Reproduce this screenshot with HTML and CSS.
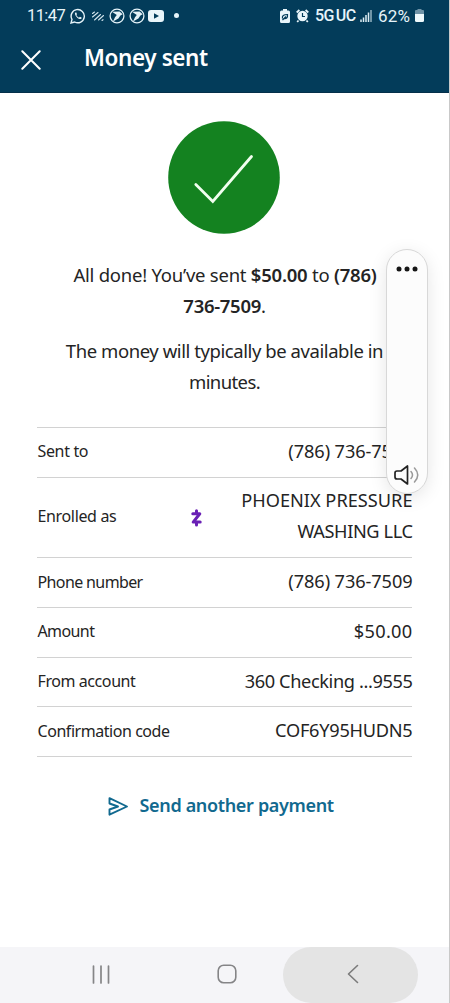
FILE: index.html
```html
<!DOCTYPE html>
<html lang="en">
<head>
<meta charset="utf-8">
<title>Money sent</title>
<link rel="stylesheet" href="styles.css">
</head>
<body>
<div class="screen">
  <header class="header">
    <div class="status">
      <div class="status-left">
        <span class="clock">11:47</span>
        <svg class="i-chat" width="16" height="16" viewBox="0 0 16 16" fill="none" stroke="#e4f2f8" stroke-width="1.4"><path d="M1 15l1-3.6A6.6 6.6 0 1 1 4.700 14z"/><path d="M5.300 4.500c-1 1.300.3 3.500 1.800 4.900s3.400 2.300 4.400 1.100l.1-.9-1.700-.8-1 .9C7.700 9.100 6.800 8.100 6.400 7.100l.6-.8-.7-1.700z" fill="#e4f2f8" stroke="none"/></svg>
        <svg class="i-lines" width="14" height="12" viewBox="0 0 14 12" stroke="#d4e6ee" stroke-width="1.100" stroke-linecap="round"><path d="M1.500 3.500l2-1.500M1.500 7L7 2.500M3.500 10L9.500 4.500M7.500 10l5-4.500M11 10.500l1-.8"/></svg>
        <svg class="i-bird" width="16" height="16" viewBox="0 0 16 16"><circle cx="8" cy="8" r="6.900" fill="none" stroke="#e4f2f8" stroke-width="1.300"/><path d="M3 3.800l7.500-.3 3.200 2.700-2.300 1.200-2 3.200-5.400 3 2-4.300 1.800-2.300z" fill="#e4f2f8"/></svg>
        <svg class="i-bird" width="16" height="16" viewBox="0 0 16 16"><circle cx="8" cy="8" r="6.900" fill="none" stroke="#e4f2f8" stroke-width="1.300"/><path d="M3 3.800l7.500-.3 3.200 2.700-2.300 1.200-2 3.200-5.400 3 2-4.300 1.800-2.300z" fill="#e4f2f8"/></svg>
        <svg class="i-video" width="16" height="12" viewBox="0 0 16 12"><rect width="16" height="12" rx="3" fill="#e9f5fa"/><path d="M6 3.200v5.600L11 6z" fill="#033c5a"/></svg>
        <span class="dot"></span>
      </div>
      <div class="status-right">
        <svg class="i-saver" width="10" height="14" viewBox="0 0 10 14"><path d="M3 0h4v1.500h1.500Q10 1.500 10 3v9.500Q10 14 8.500 14h-7Q0 14 0 12.500V3q0-1.500 1.500-1.500H3z" fill="#e9f5fa"/><path d="M2.500 9.500Q1.500 5.500 7.500 5.500 8 10 4 9.500L6 7.500M2.500 11L4 9.500" fill="none" stroke="#033c5a" stroke-width="1.200"/></svg>
        <svg class="i-alarm" width="13" height="14" viewBox="0 0 13 14"><circle cx="6.500" cy="7" r="5.200" fill="#e9f5fa"/><path d="M.7 3.500L3.400 1M12.300 3.500L9.600 1M2.500 11.500L1.200 13M10.500 11.500l1.300 1.500" stroke="#e9f5fa" stroke-width="1.800"/><path d="M6.500 4v3.500H9" fill="none" stroke="#033c5a" stroke-width="1.200"/></svg>
        <span class="network">5G<span class="uc">UC</span></span>
        <svg class="i-signal" width="12" height="12" viewBox="0 0 12 12" stroke="#dcecf3" stroke-width="1.500"><path d="M1 9.500V12M3.500 7.500V12M6 5V12M8.500 2.500V12"/><path d="M11 0V12" stroke="#95b3c2"/></svg>
        <span class="percent">62%</span>
        <svg class="i-battery" width="9" height="13" viewBox="0 0 9 13"><path d="M2.500 0h4v1H8q1 0 1 1v3H0V2q0-1 1-1h1.500z" fill="#6f93a7"/><path d="M0 5h9v6.500Q9 13 7.500 13h-6Q0 13 0 11.500z" fill="#eff9fc"/></svg>
      </div>
    </div>
    <div class="titlebar">
      <svg width="20" height="20" viewBox="0 0 20 20" stroke="#fff" stroke-width="2" stroke-linecap="round"><path d="M1.300 1.300l17.400 17.400M18.700 1.300L1.300 18.700"/></svg>
      <h1 class="title">Money sent</h1>
    </div>
  </header>
  <main class="content">
    <svg class="success" width="112" height="113" viewBox="0 0 112 113"><ellipse cx="56" cy="56.500" rx="55.800" ry="56.300" fill="#148220"/><path d="M27.800 63.500L44.800 80.500 83.500 35.500" fill="none" stroke="#f2fff0" stroke-width="2.800" stroke-linecap="round"/></svg>
    <p class="message first"><span class="ln a">All done! You’ve sent <b>$50.00</b> to <b>(786)</b></span><br><span class="ln b"><b>736-7509</b>.</span></p>
    <p class="message second"><span class="ln c">The money will typically be available in</span><br><span class="ln d">minutes.</span></p>
    <dl class="details">
      <div class="row"><dt class="k1">Sent to</dt><dd class="phone">(786) 736-7509</dd></div>
      <div class="row tall"><dt class="k2">Enrolled as</dt>
        <svg class="zelle" width="11" height="18" viewBox="0 0 11 18" fill="none" stroke="#6a20b5" stroke-width="3" stroke-linecap="round" stroke-linejoin="round"><path d="M1.800 4.700H8.800L2.200 13.100H9.200M5.500 1.800V4M5.500 14V16"/></svg>
        <dd><span class="n1">PHOENIX PRESSURE</span><br><span class="n2">WASHING LLC</span></dd></div>
      <div class="row"><dt class="k3">Phone number</dt><dd class="phone">(786) 736-7509</dd></div>
      <div class="row"><dt class="k4">Amount</dt><dd class="v4">$50.00</dd></div>
      <div class="row"><dt class="k5">From account</dt><dd class="v5">360 Checking ...9555</dd></div>
      <div class="row"><dt class="k6">Confirmation code</dt><dd class="v6">COF6Y95HUDN5</dd></div>
    </dl>
    <a class="again"><svg width="21" height="19" viewBox="0 0 21 19" fill="none" stroke="#11698f" stroke-width="1.900" stroke-linejoin="round" stroke-linecap="round"><path d="M1.500 1.200L19 9.500 1.500 17.700V12.500L10 9.500 1.500 6.500z"/></svg><span class="again-label">Send another payment</span></a>
  </main>
  <nav class="nav">
    <svg class="recents" width="18" height="19" viewBox="0 0 18 19" stroke="#858587" stroke-width="1.700" stroke-linecap="round"><path d="M1.500 1v17M9 1v17M16.500 1v17"/></svg>
    <svg class="home" width="20" height="20" viewBox="0 0 20 20" fill="none" stroke="#858587" stroke-width="1.600"><rect x="1.200" y="1.200" width="17.600" height="17.600" rx="5.500"/></svg>
    <div class="back"><svg width="12" height="20" viewBox="0 0 12 20" fill="none" stroke="#7b7b7b" stroke-width="1.600" stroke-linecap="round" stroke-linejoin="round"><path d="M10.500 1.500L1.500 10l9 8.500"/></svg></div>
  </nav>
  <aside class="volume">
    <svg width="22" height="6" viewBox="0 0 22 6" fill="#161616"><circle cx="3" cy="3" r="2.500"/><circle cx="11" cy="3" r="2.500"/><circle cx="19" cy="3" r="2.500"/></svg>
    <svg width="26" height="20" viewBox="0 0 26 20" fill="none" stroke="#222" stroke-width="1.700" stroke-linejoin="round" stroke-linecap="round"><path d="M13.500 1v18L7 14H3Q1 14 1 12V8Q1 6 3 6h4z"/><path d="M17 6.500q3 3.500 0 7M20.500 3q6.500 7 0 14" stroke="#999" stroke-width="1.500"/></svg>
  </aside>
</div>
</body>
</html>
```
FILE: styles.css
```css
* { box-sizing: border-box; }
body { margin: 0; font-family: "Noto Sans", sans-serif; color: #242424; }
.screen { position: relative; width: 450px; height: 1003px; display: flex; flex-direction: column; background: #fff; border-right: 1px solid #c9c9c9; overflow: hidden; }
svg { display: block; flex: none; }
.header { height: 93px; margin-right: -1px; background: #033c5a; border-bottom: 1px solid #05304a; color: #fff; flex: none; }
.status { height: 31px; display: flex; justify-content: space-between; align-items: center; padding: 0 26px 0 27px; font-family: Roboto, sans-serif; color: #e6f4f9; }
.status-left, .status-right { display: flex; align-items: center; }
.clock { font-size: 16.500px; width: 43px; letter-spacing: -.6px; white-space: nowrap; }
.i-lines { margin-left: 5px; }
.i-bird { margin-left: 4px; }
.i-video { margin-left: 3px; }
.dot { width: 5px; height: 5px; border-radius: 50%; background: #e6f4f9; margin-left: 10px; }
.i-alarm { margin-left: 6px; }
.network { margin-left: 6px; font-size: 16px; font-weight: 500; letter-spacing: -.6px; width: 40px; white-space: nowrap; }
.uc { margin-left: 2px; }
.i-signal { margin-left: 5px; }
.percent { margin-left: 6px; font-size: 17px; width: 35px; letter-spacing: .2px; white-space: nowrap; }
.i-battery { margin-left: 2px; }
.titlebar { height: 56px; display: flex; align-items: center; padding: 1px 0 0 21px; }
.title { margin: -3px 0 0 43px; font-size: 22.500px; line-height: 30px; font-weight: 600; letter-spacing: -.4px; white-space: nowrap; }
.content { flex: 1; display: flex; flex-direction: column; align-items: center; padding-top: 28px; }
.success { margin-right: 1px; }
.message { margin: 0; width: 375px; text-align: center; font-size: 18.500px; line-height: 31px; white-space: nowrap; }
.first { margin-top: 25px; }
.second { margin-top: 14px; }
.message b { font-weight: 600; }
.a { letter-spacing: -.24px; margin-left: 1px; }
.b { letter-spacing: -.3px; }
.c { letter-spacing: -.43px; }
.d { letter-spacing: -.6px; }
.details { margin: 30px 0 0; width: 375px; border-top: 1.500px solid #d2d2d2; }
.row { display: flex; align-items: center; height: 49.700px; padding-bottom: 2px; border-bottom: 1.500px solid #d2d2d2; }
.tall { height: 80.700px; padding-bottom: 3px; }
dt { font-size: 16px; line-height: 24px; padding-left: .5px; white-space: nowrap; }
.k1 { letter-spacing: -.35px; }
.k2 { letter-spacing: -.35px; width: 83px; }
.k3 { letter-spacing: -.62px; }
.k4 { letter-spacing: -.6px; }
.k5 { letter-spacing: -.42px; }
.k6 { letter-spacing: -.45px; }
dd { margin: 0 -.5px 0 auto; text-align: right; font-size: 18.200px; line-height: 31px; white-space: nowrap; }
.phone { letter-spacing: -.1px; }
.n2 { letter-spacing: -.4px; }
.v4 { letter-spacing: .3px; }
.v5 { letter-spacing: -.38px; }
.v6 { letter-spacing: -.26px; }
.zelle { margin: 3px 0 0 71px; }
.again { display: flex; align-items: center; margin: 33px 7px 0 0; height: 30px; color: #11698f; font-size: 18px; font-weight: 600; white-space: nowrap; }
.again svg { margin-top: 3px; }
.again-label { margin-left: 11px; width: 195px; letter-spacing: -.34px; }
.nav { height: 56px; flex: none; background: #f5f5f8; display: flex; align-items: center; padding-left: 92px; }
.recents, .home { margin-bottom: 2px; }
.home { margin-left: 107px; }
.back { margin-left: 46px; width: 135px; height: 56px; border-radius: 28px; background: #e4e4e4; display: flex; align-items: center; padding: 0 0 2px 64px; }
.volume { position: absolute; left: 386px; top: 249px; width: 42px; height: 245px; border-radius: 21px; background: #fcfcfc; border: 1px solid #d8d8d8; box-shadow: 0 4px 18px rgba(0,0,0,.1); display: flex; flex-direction: column; align-items: center; justify-content: space-between; padding: 16px 0 8px; }
```
